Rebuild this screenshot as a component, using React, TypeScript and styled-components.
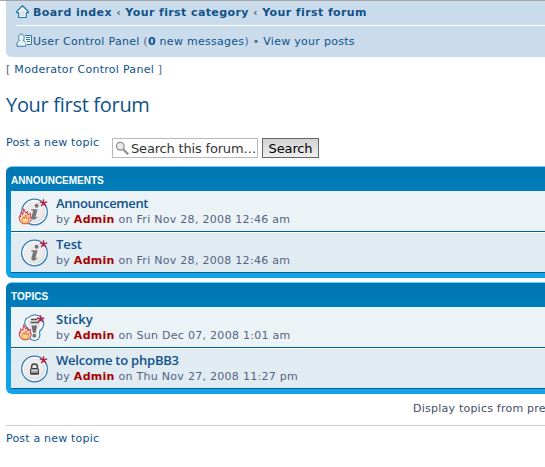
import React from "react";
import styled, { createGlobalStyle } from "styled-components";

const Global = createGlobalStyle`
  * { box-sizing: border-box; }
  html, body { margin: 0; background: #fff; overflow: hidden; }
  body { font: 11px/14px "DejaVu Sans", Verdana, sans-serif; color: #536482; }
`;

const Page = styled.div`
  width: 545px;
  height: 467px;
  padding-left: 6px;
  border-top: 1px solid #a5a5a5;
  overflow: hidden;
  white-space: nowrap;
  letter-spacing: 0.28px;
`;

const Link = styled.a`
  color: #105289;
  text-decoration: none;
`;

const Navbar = styled.nav`
  height: 56px;
  padding-left: 10px;
  background: #cadceb;
  border-bottom-left-radius: 5px;
`;

const NavRow = styled.div<{ $height: number; $bold?: boolean; $line?: boolean }>`
  display: flex;
  align-items: center;
  height: ${(p) => p.$height}px;
  font-weight: ${(p) => (p.$bold ? "bold" : "normal")};
  letter-spacing: ${(p) => (p.$bold ? 0.4 : 0.28)}px;
  border-bottom: ${(p) => (p.$line ? "1px solid #fff" : "none")};
  white-space: pre;
  svg { flex: none; margin: 0 ${(p) => (p.$bold ? 4 : 0)}px 3px 0; }
`;

const Moderator = styled.p`
  margin: 6px 0 0;
  height: 14px;
`;

const Heading = styled.h2`
  margin: 16px 0 0;
  height: 24px;
  font: 500 20px/24px "Trebuchet MS", "Open Sans", sans-serif;
  letter-spacing: -0.3px;
`;

const Actions = styled.div`
  display: flex;
  margin-top: 18px;
  height: 31px;
  padding-top: 2px;
`;

const PostLink = styled.div`
  width: 106px;
  line-height: 14px;
  margin-top: -1px;
  letter-spacing: 0.19px;
`;

const SearchField = styled.div`
  display: flex;
  align-items: center;
  width: 146px;
  height: 20px;
  margin-top: 1px;
  padding-left: 2px;
  border: 1px solid #b4bac0;
  color: #333;
  font-size: 13px;
  letter-spacing: -0.18px;
  svg { margin-right: 2px; flex: none; }
  span { padding-top: 2px; }
`;

const SearchButton = styled.button`
  width: 57px;
  height: 20px;
  margin: 1px 0 0 4px;
  padding: 2px 0 0;
  border: 1px solid #666;
  background: linear-gradient(#d2d2d2, #efefef);
  color: #000;
  font: 13px/16px "DejaVu Sans", Verdana, sans-serif;
  letter-spacing: -0.15px;
`;

const Panel = styled.section`
  height: 112px;
  margin-bottom: 4px;
  padding-left: 5px;
  border-top: 1px solid #6aceff;
  border-radius: 6px 0 0 6px;
  background: linear-gradient(#0076b1 0, #007ebb 25px, #12a3eb 85px);
  h3 {
    margin: 0;
    height: 24px;
    padding-top: 7px;
    color: #fff;
    font: bold 10px/14px "Liberation Sans", Arial, sans-serif;
    letter-spacing: 0;
  }
`;

const TopicRow = styled.article<{ $alt?: boolean }>`
  display: flex;
  height: 41px;
  padding: 4px 0 0 4px;
  background: ${(p) => (p.$alt ? "#e1ebf2" : "#ecf3f7")};
  border-bottom: 1px solid #00608f;
  & + & { border-top: 1px solid #fff; padding-top: 3px; }
  svg { flex: none; margin: 2.5px 1px 0 3px; overflow: visible; }
`;

const TopicText = styled.div`
  padding-top: 1px;
`;

const Title = styled.a<{ $ls: number }>`
  display: block;
  height: 17px;
  color: #105289;
  font: 600 13px/15px "Trebuchet MS", "Open Sans", sans-serif;
  letter-spacing: ${(p) => p.$ls}px;
`;

const Author = styled.b`
  color: #a00;
`;

const Display = styled.div`
  margin-left: 407px;
  height: 27px;
  padding-top: 4px;
  color: #425067;
  letter-spacing: 0.23px;
`;

const Footer = styled.footer`
  padding-top: 6px;
  border-top: 1px solid #ccc;
  letter-spacing: 0.19px;
`;

const HomeIcon = () => (
  <svg width="13" height="13" viewBox="0 0 13 13">
    <path d="M6.5.8.7 6.5v1.2h2v4.8h7.6V7.7h2V6.5Z" fill="#fff" stroke="#1b79b2" strokeWidth="1.2" strokeLinejoin="round" />
    <path d="M6.5 4 4.3 6.3v4.8h4.4V6.3Z" fill="#e2e2e2" />
  </svg>
);

const UserIcon = () => (
  <svg width="17" height="15" viewBox="0 0 17 15">
    <path d="M1 13.3V11c0-2 1.4-3 2.5-3.3C1.8 5.5 2.2 1.2 5.3 1.2S8.9 5.5 7.2 7.7C8.5 8 10 9 10 11v2.3Z" fill="#e9f0f4" stroke="#397eaa" />
    <path d="M9 2.5h6.5v9h-5.2L8.8 8Z" fill="#f5fbff" />
    <path d="M9 2.5h6.5v9H11M10 4.5h4M10 6.5h4M10.5 8.5H14" fill="none" stroke="#2f78a7" />
  </svg>
);

const SearchIcon = () => (
  <svg width="14" height="14" viewBox="0 0 14 14">
    <path d="m8.5 8.5 4 4" stroke="#777" strokeWidth="2.2" strokeLinecap="round" />
    <path d="m8.8 8.4 3.6 3.6" stroke="#ccc" strokeWidth=".8" />
    <circle cx="5.3" cy="5.2" r="3.9" fill="#e4e8e9" stroke="#909090" strokeWidth="1.2" />
    <path d="M3 5a2.5 2.5 0 0 1 2.5-2.2" stroke="#fff" fill="none" />
  </svg>
);

const Ring = () => (
  <>
    <circle cx="13.5" cy="14" r="12.8" fill="#fff" stroke="#3a7fb7" strokeWidth="1.3" />
    <circle cx="13.7" cy="14.2" r="10.6" fill="#dedfe2" />
    <circle cx="13" cy="13.4" r="9.6" fill="#ececee" />
  </>
);

const Flame = () => (
  <g transform="translate(-2.4 10.7)">
    <path d="M4 15C1 13 0 10 1 7l1 1.5L2.2 4l2 2L5 0l2.4 4.500L9 2.500l.3 4L12 4.500l-.6 4.200 1-.4c.6 3-.8 5.500-3.400 6.700Z" fill="#ffe3c0" stroke="#cf3a50" strokeWidth="1" />
    <path d="M4.500 14.500C2.500 12 3.500 9.500 5 8l.7 2 1.500-4 .7 4L10 8.500c.5 2-.4 5-2 6Z" fill="#ffe07a" stroke="#e0503c" strokeWidth=".8" />
  </g>
);

const Star = ({ x }: { x: number }) => (
  <path
    transform={`translate(${x} 5)`}
    d="M0 0V-3.800M0 0 3.700-1.200M0 0 2.300 3.200M0 0-2.300 3.200M0 0-3.700-1.200"
    fill="none"
    stroke="#b81d43"
    strokeWidth="1.400"
  />
);

const StickyShape = () => (
  <>
    <g fill="#3a7fb7">
      <circle cx="14" cy="9.6" r="9.3" />
      <circle cx="9.5" cy="8.8" r="6.4" />
      <circle cx="13.4" cy="21" r="6.1" />
      <path d="M7.5 14h12.5l-1.5 8H8Z" />
    </g>
    <g fill="#fff">
      <circle cx="14" cy="9.6" r="8.1" />
      <circle cx="9.5" cy="8.8" r="5.2" />
      <circle cx="13.4" cy="21" r="4.9" />
      <path d="M8.8 14h10l-1.4 7H9Z" />
    </g>
    <path d="M7 6.5c4-4.5 12-3.5 12.8 2 .5 4-3 5.5-3.4 8 1.5 5-.5 8-3 8s-4.400-3-3-8C10 14 5 11 7 6.5Z" fill="#e6e7e9" />
    <path d="M10 5.5h6.5M9.5 8.5h8.5" stroke="#555" strokeWidth="1.4" />
    <path d="M10.5 11.5h5.6l-1.5 7.3h-2.6Z" fill="#6c6c6c" />
    <circle cx="13.3" cy="21.7" r="1.9" fill="#777" />
  </>
);

type Kind = "info" | "sticky" | "locked";

const TopicIcon = ({ kind, hot }: { kind: Kind; hot?: boolean }) => (
  <svg width="37" height="29" viewBox="-3 0 37 29">
    {kind === "sticky" ? <StickyShape /> : <Ring />}
    {kind === "info" && (
      <g fill="#777">
        <circle cx="15.6" cy="7.7" r="2" />
        <path d="M10.3 11.3h6.3l-2.1 7.4c-.2 1 .6.9 1.7-.1l.4.6c-3.7 4-7.1 2.7-6.1-.6l1.5-5c.2-.8-.3-1-1.7-1Z" />
      </g>
    )}
    {kind === "locked" && (
      <g>
        <path d="M10.6 14v-2.3c0-3.6 5.8-3.6 5.8 0V14" fill="none" stroke="#444" strokeWidth="1.5" />
        <rect x="9.5" y="13.5" width="8" height="5.5" rx="1" fill="#a0a0a0" stroke="#444" />
        <path d="M11 15.5h5" stroke="#ddd" />
        <path d="M9 18.7h9" stroke="#333" strokeWidth="1.3" />
      </g>
    )}
    {hot && <Flame />}
    <Star x={kind === "sticky" ? 19.5 : 22.5} />
  </svg>
);

interface TopicProps {
  title: string;
  date: string;
  kind: Kind;
  hot?: boolean;
  alt?: boolean;
  spacing?: number;
}

const Topic = ({ title, date, kind, hot, alt, spacing = 0 }: TopicProps) => (
  <TopicRow $alt={alt}>
    <TopicIcon kind={kind} hot={hot} />
    <TopicText>
      <Title $ls={spacing}>{title}</Title>
      <div>by <Author>Admin</Author> on {date}</div>
    </TopicText>
  </TopicRow>
);

export default function App() {
  return (
    <Page>
      <Global />
      <Navbar>
        <NavRow $height={25} $bold $line>
          <HomeIcon />
          <Link>Board index</Link>
          <span> ‹ </span>
          <Link>Your first category</Link>
          <span> ‹ </span>
          <Link>Your first forum</Link>
        </NavRow>
        <NavRow $height={31}>
          <UserIcon />
          <Link>User Control Panel</Link>
          <span> (</span>
          <Link><b>0</b> new messages</Link>
          <span>) • </span>
          <Link>View your posts</Link>
        </NavRow>
      </Navbar>
      <Moderator>[ <Link>Moderator Control Panel</Link> ]</Moderator>
      <Heading><Link>Your first forum</Link></Heading>
      <Actions>
        <PostLink><Link>Post a new topic</Link></PostLink>
        <SearchField><SearchIcon /><span>Search this forum…</span></SearchField>
        <SearchButton>Search</SearchButton>
      </Actions>
      <Panel>
        <h3>ANNOUNCEMENTS</h3>
        <Topic title="Announcement" date="Fri Nov 28, 2008 12:46 am" kind="info" hot spacing={-0.4} />
        <Topic title="Test" date="Fri Nov 28, 2008 12:46 am" kind="info" alt spacing={-0.1} />
      </Panel>
      <Panel>
        <h3>TOPICS</h3>
        <Topic title="Sticky" date="Sun Dec 07, 2008 1:01 am" kind="sticky" hot />
        <Topic title="Welcome to phpBB3" date="Thu Nov 27, 2008 11:27 pm" kind="locked" alt spacing={-0.22} />
      </Panel>
      <Display>Display topics from pre</Display>
      <Footer><Link>Post a new topic</Link></Footer>
    </Page>
  );
}
